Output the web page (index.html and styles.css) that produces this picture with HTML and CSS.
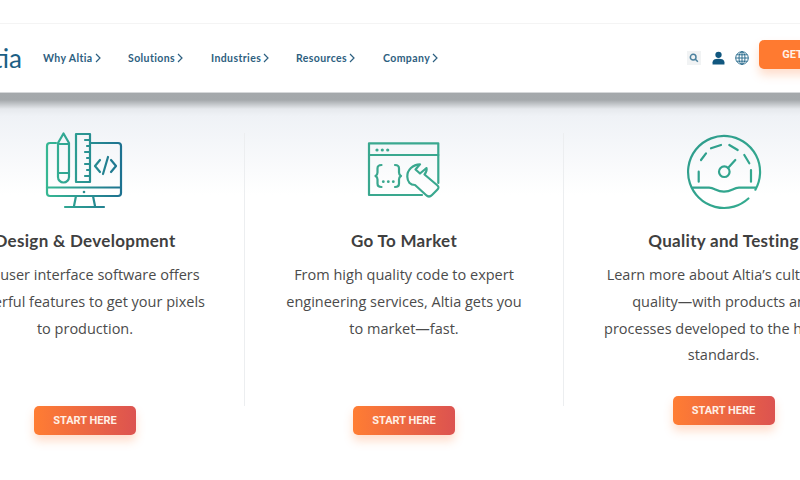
FILE: index.html
```html
<!DOCTYPE html>
<html lang="en-US">
<head>
    <meta charset="UTF-8">
    <title>Altia</title>
    <link rel="stylesheet" href="styles.css">
</head>
<body>
    <header class="site-header">
        <div class="logo">Altia</div>
        <nav class="nav">
            <a class="nav-item nav-why">Why Altia<svg class="chev" viewBox="0 0 6 10"><path d="M1 1l4 4-4 4"/></svg></a>
            <a class="nav-item nav-solutions">Solutions<svg class="chev" viewBox="0 0 6 10"><path d="M1 1l4 4-4 4"/></svg></a>
            <a class="nav-item nav-industries">Industries<svg class="chev" viewBox="0 0 6 10"><path d="M1 1l4 4-4 4"/></svg></a>
            <a class="nav-item nav-resources">Resources<svg class="chev" viewBox="0 0 6 10"><path d="M1 1l4 4-4 4"/></svg></a>
            <a class="nav-item">Company<svg class="chev" viewBox="0 0 6 10"><path d="M1 1l4 4-4 4"/></svg></a>
        </nav>
        <div class="actions">
            <span class="search-box">
                <svg viewBox="0 0 12 12" width="10" height="10"><circle cx="5" cy="5" r="3.4"/><path d="M7.6 7.6l3 3"/></svg>
            </span>
            <svg class="icon-user" viewBox="0 0 14 14" width="13" height="14"><circle cx="7" cy="3.6" r="3.4"/><path d="M.6 14v-2.4C.6 9 3 7.8 7 7.8s6.400 1.200 6.400 3.800V14z"/></svg>
            <svg class="icon-globe" viewBox="0 0 14 14" width="14" height="14"><circle cx="7" cy="7" r="6.300"/><ellipse cx="7" cy="7" rx="3" ry="6.300"/><path d="M7 .7v12.600M.7 7h12.600M1.600 3.800h10.800M1.600 10.200h10.800"/></svg>
            <a class="btn btn-get">GET STARTED</a>
        </div>
    </header>

    <main class="features">
        <section class="feature">
            <svg class="feature-icon" viewBox="0 0 80 80" width="80" height="80">
                <defs>
                    <linearGradient id="grad1" gradientUnits="userSpaceOnUse" x1="0" y1="0" x2="80" y2="0">
                        <stop offset="0" stop-color="#37b993"/>
                        <stop offset="1" stop-color="#1c6e90"/>
                    </linearGradient>
                </defs>
                <g class="line" stroke="url(#grad1)">
                    <path d="M11 13H5a3 3 0 0 0-3 3v47a3 3 0 0 0 3 3h68a3 3 0 0 0 3-3V16a3 3 0 0 0-3-3H46"/>
                    <path d="M2 57.500h74"/>
                    <path d="M31 66l-2 10M48 66l2 10M20 77h39"/>
                    <path d="M13 47V13l5.500-9.500L24 13v34a5.500 5.500 0 0 1-11 0zM13 14h11M13 43h11"/>
                    <path d="M31 4h14v48H31zM45 10h-5M45 16h-3M45 22h-5M45 28h-3M45 34h-5M45 40h-3M45 46h-5"/>
                    <path d="M55 30l-5 6 5 6M66 30l5 6-5 6M63 27l-5 17"/>
                </g>
                <circle cx="39" cy="62" r="1.300" fill="#2a8f90"/>
            </svg>
            <h2 class="feature-title">Design &amp; Development</h2>
            <p class="feature-text">Our user interface software offers<br>powerful features to get your pixels<br>to production.</p>
            <a class="btn">START HERE</a>
        </section>

        <section class="feature">
            <svg class="feature-icon" viewBox="0 0 80 80" width="80" height="80">
                <g class="line" stroke="#3aa88f">
                    <path d="M74.300 53V13.300H5V65h53"/>
                    <path d="M5 25h69.300"/>
                    <path d="M17.500 35c-3 0-4 1-4 3.500v4c0 2-1 3-2 3.500 1 .5 2 1.500 2 3.500v4c0 2.500 1 3.500 4 3.500M31 35c3 0 4 1 4 3.500v4c0 2 1 3 2 3.500-1 .5-2 1.500-2 3.500v4c0 2.500-1 3.500-4 3.500"/>
                    <path d="M56 34.300C49 34.500 43 40 43.300 46.700C43.400 49 44 51 45.300 52.700C47 54.500 49 55 51 55L62 65C64 67 66 67 68 65L73 60C75 58 75 57 73.500 55.500L60.500 44.500C62 42.500 63 40 62.500 38L56 43.500L51.500 39.500z"/>
                </g>
                <g fill="#3aa88f">
                    <circle cx="13" cy="20" r="1.600"/><circle cx="18.300" cy="20" r="1.600"/><circle cx="23.700" cy="20" r="1.600"/>
                    <circle cx="19.300" cy="51.700" r="1.400"/><circle cx="24.300" cy="51.700" r="1.400"/><circle cx="29.300" cy="51.700" r="1.400"/>
                </g>
            </svg>
            <h2 class="feature-title">Go To Market</h2>
            <p class="feature-text">From high quality code to expert<br>engineering services, Altia gets you<br>to market—fast.</p>
            <a class="btn">START HERE</a>
        </section>

        <section class="feature feature-long">
            <svg class="feature-icon" viewBox="1 0 80 80" width="80" height="80">
                <defs>
                    <linearGradient id="grad3" gradientUnits="userSpaceOnUse" x1="0" y1="0" x2="80" y2="80">
                        <stop offset="0" stop-color="#2e9a8c"/>
                        <stop offset="1" stop-color="#35ad90"/>
                    </linearGradient>
                </defs>
                <g class="line" stroke="url(#grad3)">
                    <path d="M65.400 68.500A36 36 0 1 1 72.400 59.700"/>
                    <path d="M9.700 57.700H26C32 57.700 33 61.700 41 61.700S50 57.700 56 57.700H73"/>
                    <path d="M15.700 51.700V41.700M18 30L23 23.300M28 18.300L38 15M46.300 15L54.700 20M61.300 25L66.300 33.300M68 40V51.700"/>
                    <circle cx="41.300" cy="41.700" r="5.300"/>
                    <path d="M45 38L52.300 30"/>
                </g>
            </svg>
            <h2 class="feature-title">Quality and Testing</h2>
            <p class="feature-text">Learn more about Altia’s culture of<br>quality—with products and<br>processes developed to the highest<br>standards.</p>
            <a class="btn">START HERE</a>
        </section>
    </main>
</body>
</html>
```

FILE: styles.css
```css
* {
    margin: 0;
    padding: 0;
    box-sizing: border-box;
}

html,
body {
    width: 800px;
    height: 480px;
    overflow: hidden;
}

body {
    font-family: "Open Sans", sans-serif;
    color: #444;
    padding-top: 23px;
    background: linear-gradient(#fff 90px, #a4a8ab 92px, #a5a9ac 100px, #e6e9ed 109px, #eff2f6 116px, #fff 195px);
}

.site-header {
    display: flex;
    align-items: center;
    width: 886px;
    height: 70px;
    margin-left: -10px;
    background: #fff;
    border-top: 1px solid #f4f4f4;
    border-bottom: 1px solid #d6d8da;
}

.logo {
    width: 53px;
    font-family: "Lato", sans-serif;
    font-size: 26px;
    color: #1b5f85;
    text-align: right;
    padding-right: 21px;
    direction: rtl;
    white-space: nowrap;
}

.nav {
    display: flex;
    align-items: center;
    font-family: "Lato", sans-serif;
    font-size: 10.500px;
    font-weight: 700;
    color: #2d6080;
}

.nav-item {
    display: flex;
    align-items: center;
    gap: 2px;
    letter-spacing: 0.4px;
}

.nav-why { width: 85px; }
.nav-solutions { width: 83px; }
.nav-industries { width: 85px; }
.nav-resources { width: 87px; }

.chev {
    width: 6px;
    height: 10px;
    fill: none;
    stroke: #2d6080;
    stroke-width: 1.200;
}

.actions {
    display: flex;
    align-items: center;
    margin-left: auto;
}

.search-box {
    display: flex;
    align-items: center;
    justify-content: center;
    width: 14px;
    height: 14px;
    margin-right: 11px;
    background: #f1f3f4;
}

.search-box svg {
    fill: none;
    stroke: #4d829f;
    stroke-width: 1.800;
}

.icon-user {
    fill: #11577f;
    margin-right: 10px;
}

.icon-globe {
    fill: none;
    stroke: #1f6488;
    stroke-width: 0.900;
    margin-right: 10px;
}

.btn {
    display: flex;
    align-items: center;
    justify-content: center;
    flex-shrink: 0;
    width: 102px;
    height: 29px;
    font-family: "Roboto", sans-serif;
    font-size: 11px;
    font-weight: 700;
    color: #fff0e6;
    background: linear-gradient(90deg, #ff7d33, #dc5350);
    border-radius: 5px;
    box-shadow: 0 6px 10px rgba(255, 125, 50, 0.25);
}

.btn-get {
    width: 117px;
    margin-bottom: 7px;
    background: #ff7a30;
}

.features {
    display: flex;
    width: 957px;
    margin-left: -74px;
    margin-top: 40px;
}

.feature {
    display: flex;
    flex-direction: column;
    align-items: center;
    width: 319px;
    height: 273px;
    border-right: 1px solid #eceef0;
}

.feature-long {
    border-right: none;
}

.feature-icon {
    flex-shrink: 0;
    margin-top: -3px;
}

.line {
    fill: none;
    stroke-width: 2.200;
    stroke-linecap: round;
    stroke-linejoin: round;
}

.feature-title {
    flex-shrink: 0;
    margin-top: 19px;
    font-family: "Lato", sans-serif;
    font-size: 17px;
    font-weight: 700;
    line-height: 24px;
    letter-spacing: 0.3px;
    color: #3f3f3f;
}

.feature-text {
    flex-shrink: 0;
    height: 144px;
    margin-top: 9px;
    font-size: 14.500px;
    line-height: 26.800px;
    text-align: center;
    white-space: nowrap;
    color: #4b4b4b;
}

.feature-long .feature-text {
    height: 134px;
}
```
